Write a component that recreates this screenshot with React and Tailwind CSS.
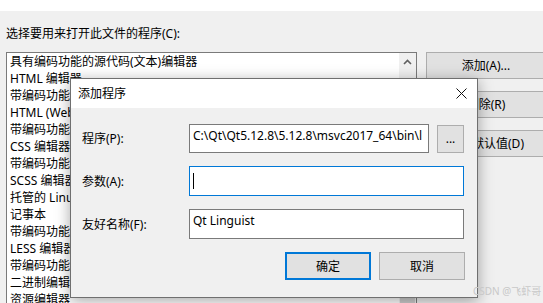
const items = [
  '具有编码功能的源代码(文本)编辑器',
  'HTML 编辑器',
  '带编码功能的 HTML 编辑器',
  'HTML (Web 窗体)编辑器',
  '带编码功能的 HTML (Web 窗体)编辑器',
  'CSS 编辑器',
  '带编码功能的 CSS 编辑器',
  'SCSS 编辑器',
  '托管的 Linux 编辑器',
  '记事本',
  '带编码功能的 SCSS 编辑器',
  'LESS 编辑器',
  '带编码功能的 LESS 编辑器',
  '二进制编辑器',
  '资源编辑器',
];

const SideButton = ({ children }) => (
  <div className="h-[27px] w-[120px] flex items-center justify-center bg-[#e1e1e1] border border-[#adadad] text-black">
    {children}
  </div>
);

const Field = ({ label, children }) => (
  <div className="flex items-center">
    <div className="w-[107px] shrink-0">{label}</div>
    {children}
  </div>
);

const App = () => {
  return (
    <div className="relative w-[543px] h-[303px] overflow-hidden bg-[#f0f0f0] text-[12px] leading-[17px] text-black font-['Noto_Sans','Noto_Sans_CJK_SC',sans-serif]">
      {/* window top edge */}
      <div className="h-[11px] bg-white" />

      <div className="pl-[6px] pt-[14px]">
        <div>选择要用来打开此文件的程序(C):</div>

        <div className="flex mt-[10px] gap-[9px]">
          {/* list box */}
          <div className="w-[411px] h-[260px] shrink-0 flex bg-white border border-[#7a7a7a]">
            <div className="flex-1 pl-[3px] overflow-hidden">
              {items.map((t) => (
                <div key={t} className="h-[17px] whitespace-nowrap">{t}</div>
              ))}
            </div>
            <div className="w-[17px] flex flex-col bg-[#f0f0f0]">
              <div className="h-[17px] flex items-center justify-center">
                <svg width="9" height="6" viewBox="0 0 9 6">
                  <path d="M1 5 L4.5 1.5 L8 5" fill="none" stroke="#606060" strokeWidth="1.6" />
                </svg>
              </div>
              <div className="mt-[190px] mx-[1px] flex-1 bg-[#cdcdcd]" />
            </div>
          </div>

          {/* side buttons */}
          <div className="flex flex-col gap-[12px]">
            <SideButton>添加(A)...</SideButton>
            <SideButton>删除(R)</SideButton>
            <SideButton>设为默认值(D)</SideButton>
          </div>
        </div>
      </div>

      {/* add program dialog */}
      <div className="absolute left-[70px] top-[78px] w-[408px] h-[220px] flex flex-col border border-[#6f6f6f] bg-[#f0f0f0] shadow-[0_3px_14px_rgba(0,0,0,0.35)]">
        <div className="h-[29px] shrink-0 bg-white flex items-center justify-between pl-[7px] pr-[10px]">
          <span>添加程序</span>
          <svg width="11" height="11" viewBox="0 0 11 11">
            <path d="M0.5 0.5 L10.5 10.5 M10.5 0.5 L0.5 10.5" stroke="#111" strokeWidth="1" />
          </svg>
        </div>

        <div className="flex flex-col pl-[11px] pt-[16px]">
          <div className="flex flex-col gap-[13px]">
            <Field label="程序(P):">
              <div className="w-[240px] h-[29px] bg-white border border-[#7a7a7a] pl-[3px] pt-[2px] whitespace-nowrap overflow-hidden">
                C:\Qt\Qt5.12.8\5.12.8\msvc2017_64\bin\l
              </div>
              <div className="ml-[8px] w-[27px] h-[28px] flex items-center justify-center bg-[#e1e1e1] border border-[#adadad]">
                ...
              </div>
            </Field>
            <Field label="参数(A):">
              <div className="w-[275px] h-[30px] bg-white border border-[#0078d7] pl-[3px] flex items-center">
                <div className="w-px h-[16px] bg-black" />
              </div>
            </Field>
            <Field label="友好名称(F):">
              <div className="w-[275px] h-[30px] bg-white border border-[#7a7a7a] pl-[3px] pt-[2px]">
                Qt Linguist
              </div>
            </Field>
          </div>

          <div className="flex justify-end gap-[8px] mt-[13px] pr-[12px]">
            <div className="w-[86px] h-[28px] flex items-center justify-center bg-[#e1e1e1] border-2 border-[#0078d7]">
              确定
            </div>
            <div className="w-[86px] h-[28px] flex items-center justify-center bg-[#e1e1e1] border border-[#adadad]">
              取消
            </div>
          </div>
        </div>
      </div>

      {/* watermark */}
      <div className="absolute left-[473px] top-[284px] text-[10px] leading-[14px] text-[#c8c8c8] whitespace-nowrap">
        CSDN @飞虾哥
      </div>
    </div>
  );
};

export default App;
